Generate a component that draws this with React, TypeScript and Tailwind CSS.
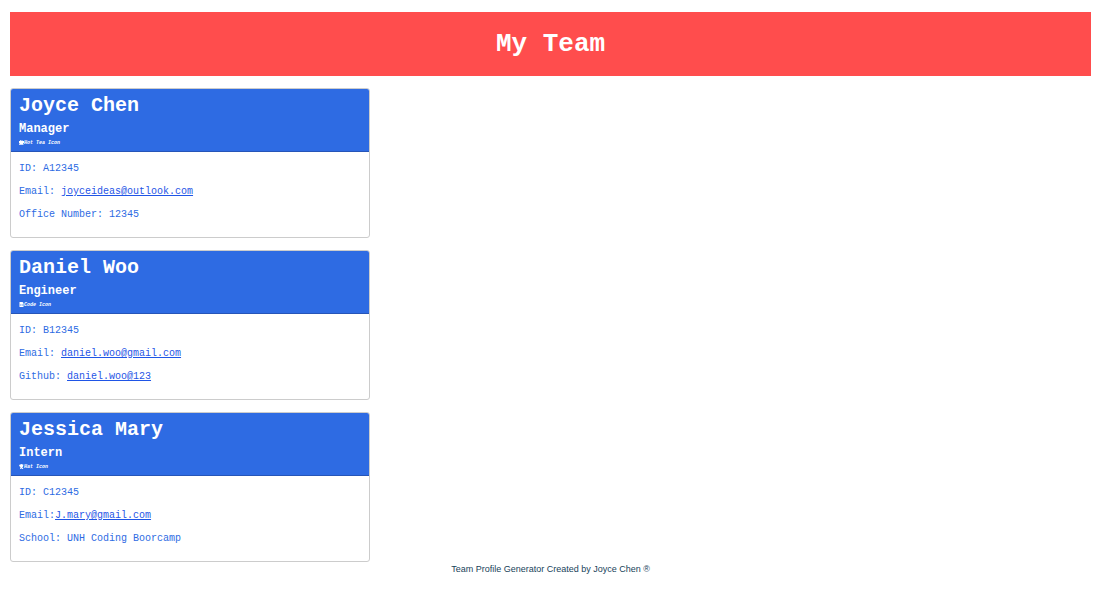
import type { ReactNode } from "react";

type Member = {
  name: string;
  role: string;
  icon: ReactNode;
  iconLabel: string;
  id: string;
  emailLabel: string;
  email: string;
  extra: ReactNode;
};

const linkClass = "text-[#1f55e6] underline";

const MugIcon = () => (
  <svg viewBox="0 0 10 10" className="size-[5px] shrink-0" fill="white" aria-hidden="true">
    <path d="M2 0h2v1.500H2zM5 0h2v1.500H5zM0 2h10v4H8.500v2H1V6H0zM0 8.500h9V10H0z" />
  </svg>
);

const CodeIcon = () => (
  <svg viewBox="0 0 10 10" className="size-[5px] shrink-0" fill="white" aria-hidden="true">
    <path fillRule="evenodd" d="M1 0h6l2 2v8H1zM4 4 2.500 6 4 8l.6-.6L3.600 6l1-1.400zM6 4l1.500 2L6 8l-.6-.6L6.400 6l-1-1.400z" />
  </svg>
);

const GraduateIcon = () => (
  <svg viewBox="0 0 10 10" className="size-[5px] shrink-0" fill="white" aria-hidden="true">
    <path d="M5 0 10 2 8 3v2L6.500 7 9 10H6L5 8l-1 2H2l1-3-1-2V3L1 3v2H0V2z" />
  </svg>
);

const members: Member[] = [
  {
    name: "Joyce Chen",
    role: "Manager",
    icon: <MugIcon />,
    iconLabel: "Hot Tea Icon",
    id: "A12345",
    emailLabel: "Email: ",
    email: "joyceideas@outlook.com",
    extra: "Office Number: 12345",
  },
  {
    name: "Daniel Woo",
    role: "Engineer",
    icon: <CodeIcon />,
    iconLabel: "Code Icon",
    id: "B12345",
    emailLabel: "Email: ",
    email: "daniel.woo@gmail.com",
    extra: (
      <>
        Github: <a href="https://github.com/daniel.woo@123" className={linkClass}>daniel.woo@123</a>
      </>
    ),
  },
  {
    name: "Jessica Mary",
    role: "Intern",
    icon: <GraduateIcon />,
    iconLabel: "Hat Icon",
    id: "C12345",
    emailLabel: "Email:",
    email: "J.mary@gmail.com",
    extra: "School: UNH Coding Boorcamp",
  },
];

function MemberCard({ member }: { member: Member }) {
  return (
    <article className="overflow-hidden rounded-[3px] border border-[#cccccc] bg-white">
      <header className="border-b border-[#2655b8] bg-[#2e6be3] px-2 py-[5px] text-white">
        <h2 className="text-[20px] leading-6 font-bold">{member.name}</h2>
        <h3 className="pt-[3px] text-[12px] leading-4 font-bold">{member.role}</h3>
        <p className="flex items-start pt-[3px] text-[5px] leading-[6px] font-bold italic">
          {member.icon}
          <span>{member.iconLabel}</span>
        </p>
      </header>
      <div className="flex flex-col gap-[11px] px-2 pt-[11px] pb-4 text-[10px] leading-3 text-[#2e6be3]">
        <p>ID: {member.id}</p>
        <p>
          {member.emailLabel}
          <a href={`mailto:${member.email}`} className={linkClass}>{member.email}</a>
        </p>
        <p>{member.extra}</p>
      </div>
    </article>
  );
}

export default function App() {
  return (
    <div className="min-h-screen bg-white px-[10px] pt-3 font-['Courier_New','Liberation_Mono',monospace]">
      <header className="bg-[#ff4d4d] py-4 text-center text-white">
        <h1 className="text-[26px] leading-8 font-bold">My Team</h1>
      </header>
      <main className="flex w-1/3 flex-col gap-3 pt-3">
        {members.map((member) => (
          <MemberCard key={member.id} member={member} />
        ))}
      </main>
      <footer className="text-center font-['Liberation_Sans',sans-serif] text-[9px] leading-[14px] text-[#173f5a]">
        Team Profile Generator Created by Joyce Chen ®
      </footer>
    </div>
  );
}
